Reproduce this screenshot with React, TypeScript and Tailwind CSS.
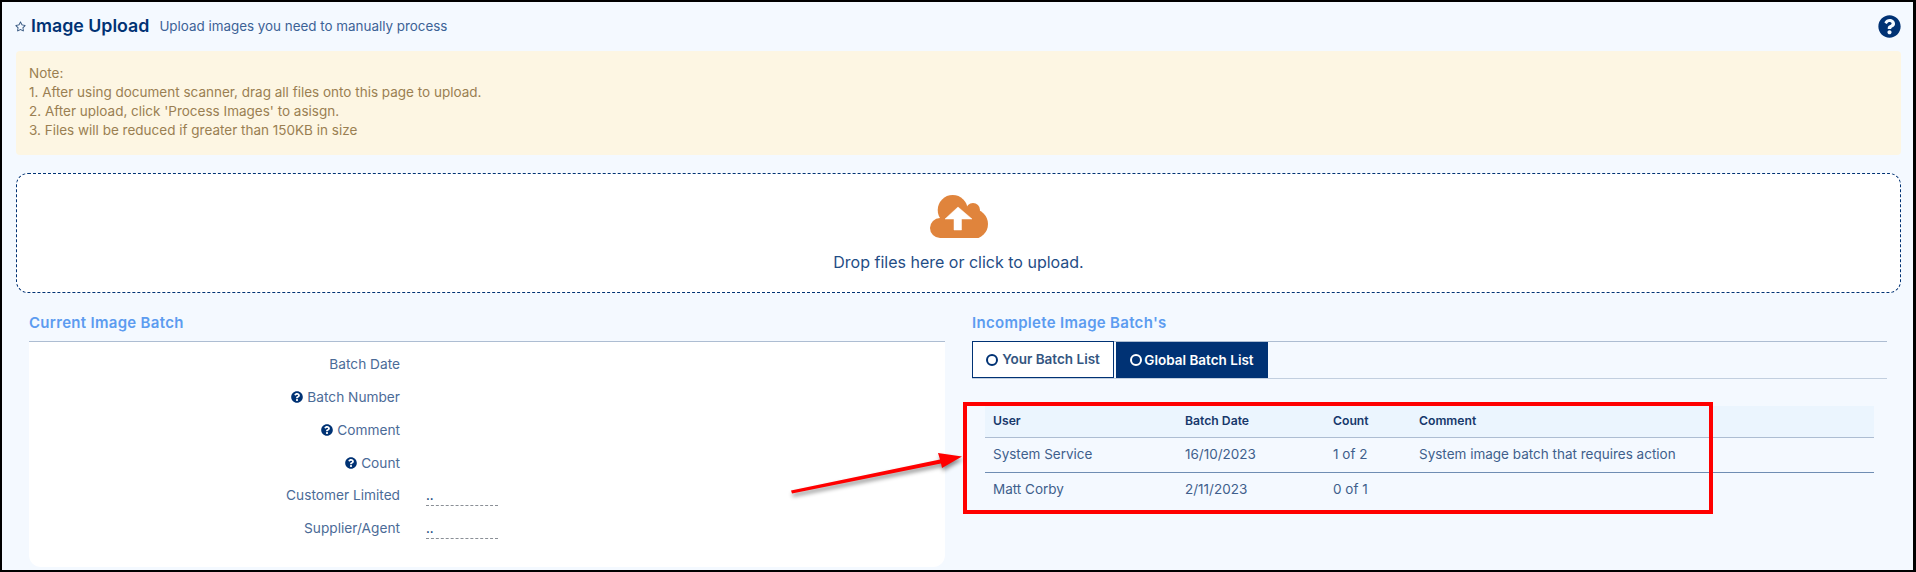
import React from 'react';
import { FaQuestionCircle, FaRegStar } from 'react-icons/fa';

// Form rows of the current batch panel
const batchFields = [
    { label: 'Batch Date', help: false, value: false },
    { label: 'Batch Number', help: true, value: false },
    { label: 'Comment', help: true, value: false },
    { label: 'Count', help: true, value: false },
    { label: 'Customer Limited', help: false, value: true },
    { label: 'Supplier/Agent', help: false, value: true },
];

const batches = [
    { user: 'System Service', date: '16/10/2023', count: '1 of 2', comment: 'System image batch that requires action' },
    { user: 'Matt Corby', date: '2/11/2023', count: '0 of 1', comment: '' },
];

const SectionTitle: React.FC<{ title: string }> = ({ title }) => (
    <div className="h-[37px] flex items-center border-b border-[#adbdd2] text-[15px] font-semibold tracking-[0.3px] text-[#5c9cf0]">
        {title}
    </div>
);

const CloudIcon: React.FC = () => (
    <svg width="58" height="43" viewBox="0 0 58 43" className="mt-[21px]">
        <g fill="#e0843c">
            <circle cx="22.7" cy="15" r="15" />
            <circle cx="43" cy="15" r="7" />
            <circle cx="43" cy="29" r="15" />
            <circle cx="10" cy="33" r="10" />
            <rect x="10" y="20" width="34" height="23" />
        </g>
        <path d="M28 12 L42 24 L31.5 24 L31.5 35 L24 35 L24 24 L15 24 Z" fill="#ffffff" stroke="#ffffff" strokeWidth="0.5" strokeLinejoin="round" />
    </svg>
);

export default function App() {
    return (
        <div className="relative h-[572px] overflow-hidden border-t-2 border-l-2 border-r-[3px] border-b-2 border-black bg-[#f4f9ff] font-[Inter,sans-serif] text-[#33557f]">
            {/* Header */}
            <div className="h-[49px] flex items-center pl-[13px] pr-[12px]">
                <FaRegStar size={11} className="text-[#33557f] mr-[5px]" />
                <h1 className="text-[17.8px] font-semibold text-[#003274]">Image Upload</h1>
                <span className="ml-[10px] text-[13.4px] text-[#3c6296]">Upload images you need to manually process</span>
                <FaQuestionCircle size={23} className="ml-auto text-[#003274]" />
            </div>

            {/* Note */}
            <div className="ml-[14px] mr-[12px] h-[104px] rounded bg-[#fdf6e3] px-[13px] pt-[13px] text-[13.5px] leading-[19px] text-[#9a7f52]">
                <div>Note:</div>
                <div>1. After using document scanner, drag all files onto this page to upload.</div>
                <div>2. After upload, click 'Process Images' to asisgn.</div>
                <div>3. Files will be reduced if greater than 150KB in size</div>
            </div>

            {/* Dropzone */}
            <div className="ml-[14px] mr-[12px] mt-[18px] h-[120px] flex flex-col items-center rounded-xl border border-dashed border-[#003274] bg-white">
                <CloudIcon />
                <div className="mt-[12px] text-[16px] text-[#1f4d85]">Drop files here or click to upload.</div>
            </div>

            <div className="flex pl-[27px] mt-[12px]">
                {/* Current batch */}
                <div className="w-[916px]">
                    <SectionTitle title="Current Image Batch" />
                    <div className="h-[225px] rounded-b-xl bg-white pt-[6px]">
                        {batchFields.map((field) => (
                            <div key={field.label} className="h-[32.8px] flex items-center text-[13.7px] text-[#4b6b97]">
                                <div className="w-[371px] flex items-center justify-end gap-[4px]">
                                    {field.help && <FaQuestionCircle size={12} className="text-[#003274]" />}
                                    {field.label}
                                </div>
                                {field.value && (
                                    <div className="ml-[26px] mt-[4px] w-[72px] h-[17px] border-b border-dashed border-[#8a8f96] text-[12px] leading-[14px] font-semibold text-[#003274]">
                                        ..
                                    </div>
                                )}
                            </div>
                        ))}
                    </div>
                </div>

                {/* Incomplete batches */}
                <div className="ml-[27px] w-[915px]">
                    <SectionTitle title="Incomplete Image Batch's" />
                    <div className="h-[37px] flex items-end gap-[2px] border-b border-[#c2cfdf]">
                        <button className="h-[37px] w-[142px] flex items-center justify-center gap-[4px] border border-[#003274] bg-white text-[13.5px] font-semibold text-[#33557f]">
                            <span className="w-3 h-3 rounded-full border-2 border-[#003274]" />
                            Your Batch List
                        </button>
                        <button className="h-[36px] w-[152px] flex items-center justify-center gap-[2px] bg-[#003274] text-[13.5px] font-semibold text-white">
                            <span className="w-3 h-3 rounded-full border-2 border-white" />
                            Global Batch List
                        </button>
                    </div>

                    <table className="mt-[27px] mx-[13px] w-[889px] table-fixed text-left text-[13.5px] text-[#3f5f8c]">
                        <thead>
                            <tr className="h-[31px] border-b border-[#adbdd2] bg-[#ebf5fe] text-[12.2px] font-semibold text-[#17386b]">
                                <th className="w-[192px] pl-2 font-semibold">User</th>
                                <th className="w-[148px] pl-2 font-semibold">Batch Date</th>
                                <th className="w-[86px] pl-2 font-semibold">Count</th>
                                <th className="pl-2 font-semibold">Comment</th>
                            </tr>
                        </thead>
                        <tbody>
                            {batches.map((batch, index) => (
                                <tr key={batch.user} className={index === 0 ? 'h-[35px] border-b border-[#6f8db3]' : 'h-[34px]'}>
                                    <td className="pl-2">{batch.user}</td>
                                    <td className="pl-2">{batch.date}</td>
                                    <td className="pl-2">{batch.count}</td>
                                    <td className="pl-2">{batch.comment}</td>
                                </tr>
                            ))}
                        </tbody>
                    </table>
                </div>
            </div>

            {/* Annotation drawn over the screenshot: red frame and arrow */}
            <div className="absolute left-[961px] top-[400px] w-[750px] h-[112px] border-4 border-[#ff0000]" />
            <svg className="absolute left-[776px] top-[438px] drop-shadow-[1px_3px_2px_rgba(0,0,0,0.45)]" width="200" height="60" viewBox="778 440 200 60">
                <path d="M791 490.5 L940 459.5 L938 453 L962 456.5 L942 468 L941 463.5 L792 493.5 Z" fill="#ff0000" />
            </svg>
        </div>
    );
}
